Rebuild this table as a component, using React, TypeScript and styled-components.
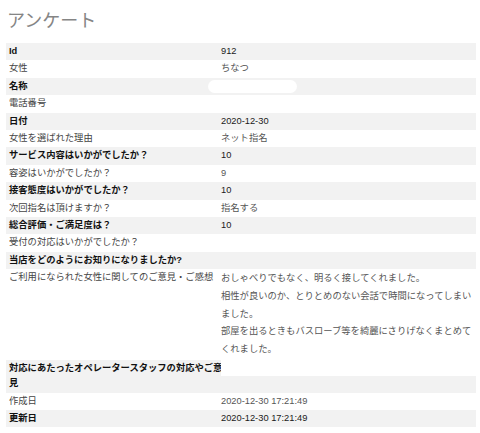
import React from "react";
import styled, { createGlobalStyle } from "styled-components";

const GlobalStyle = createGlobalStyle`
  html, body { margin: 0; padding: 0; background: #fff; }
  body { font-family: "Liberation Sans", "Noto Sans CJK JP", sans-serif; }
`;

const Page = styled.div`
  padding: 0 4px 0 6px;
`;

const Title = styled.h1`
  margin: 6px 0 11px 1px;
  font-size: 18px;
  line-height: 26px;
  font-weight: 400;
  color: #858585;
  font-family: "Noto Sans CJK JP", sans-serif;
`;

const Table = styled.div`
  display: flex;
  flex-direction: column;
  width: 470px;
  font-size: 9.3px;
`;

const Row = styled.div<{ $striped: boolean }>`
  display: grid;
  grid-template-columns: 215px 1fr;
  background: ${(p) => (p.$striped ? "#f2f2f2" : "#ffffff")};
  font-weight: ${(p) => (p.$striped ? 700 : 400)};
  color: ${(p) => (p.$striped ? "#111" : "#444")};
`;

const Label = styled.div`
  padding: 1px 0 1px 3px;
  margin-right: -6px;
  line-height: 15.4px;
`;

const Value = styled.div<{ $striped: boolean }>`
  padding: 1px 0;
  line-height: 15.4px;
  font-weight: 400;
  color: ${(p) => (p.$striped ? "#1a1a1a" : "#555")};
`;

const Line = styled.div`
  line-height: 17.7px;
`;

const Redacted = styled.span`
  display: inline-block;
  width: 89px;
  height: 13px;
  margin-left: -13px;
  vertical-align: middle;
  border-radius: 7px;
  background: #ffffff;
`;

const BlankLine = styled.div`
  height: 16px;
  margin-top: -1px;
  background: #ffffff;
`;

type Item = {
  label: string;
  value?: string | string[];
  redacted?: boolean;
  blankFirst?: boolean;
};

const items: Item[] = [
  { label: "Id", value: "912" },
  { label: "女性", value: "ちなつ" },
  { label: "名称", redacted: true },
  { label: "電話番号" },
  { label: "日付", value: "2020-12-30" },
  { label: "女性を選ばれた理由", value: "ネット指名" },
  { label: "サービス内容はいかがでしたか？", value: "10" },
  { label: "容姿はいかがでしたか？", value: "9" },
  { label: "接客態度はいかがでしたか？", value: "10" },
  { label: "次回指名は頂けますか？", value: "指名する" },
  { label: "総合評価・ご満足度は？", value: "10" },
  { label: "受付の対応はいかがでしたか？" },
  { label: "当店をどのようにお知りになりましたか?" },
  {
    label: "ご利用になられた女性に関してのご意見・ご感想",
    value: [
      "おしゃべりでもなく、明るく接してくれました。",
      "相性が良いのか、とりとめのない会話で時間になってしまい",
      "ました。",
      "部屋を出るときもバスローブ等を綺麗にさりげなくまとめて",
      "くれました。",
    ],
  },
  { label: "対応にあたったオペレータースタッフの対応やご意見", blankFirst: true },
  { label: "作成日", value: "2020-12-30 17:21:49" },
  { label: "更新日", value: "2020-12-30 17:21:49" },
];

export default function App() {
  return (
    <Page>
      <GlobalStyle />
      <Title>アンケート</Title>
      <Table>
        {items.map((item, i) => {
          const striped = i % 2 === 0;
          return (
            <Row key={item.label} $striped={striped}>
              <Label>{item.label}</Label>
              <Value $striped={striped}>
                {item.redacted && <Redacted />}
                {item.blankFirst && <BlankLine />}
                {Array.isArray(item.value)
                  ? item.value.map((l) => <Line key={l}>{l}</Line>)
                  : item.value}
              </Value>
            </Row>
          );
        })}
      </Table>
    </Page>
  );
}
